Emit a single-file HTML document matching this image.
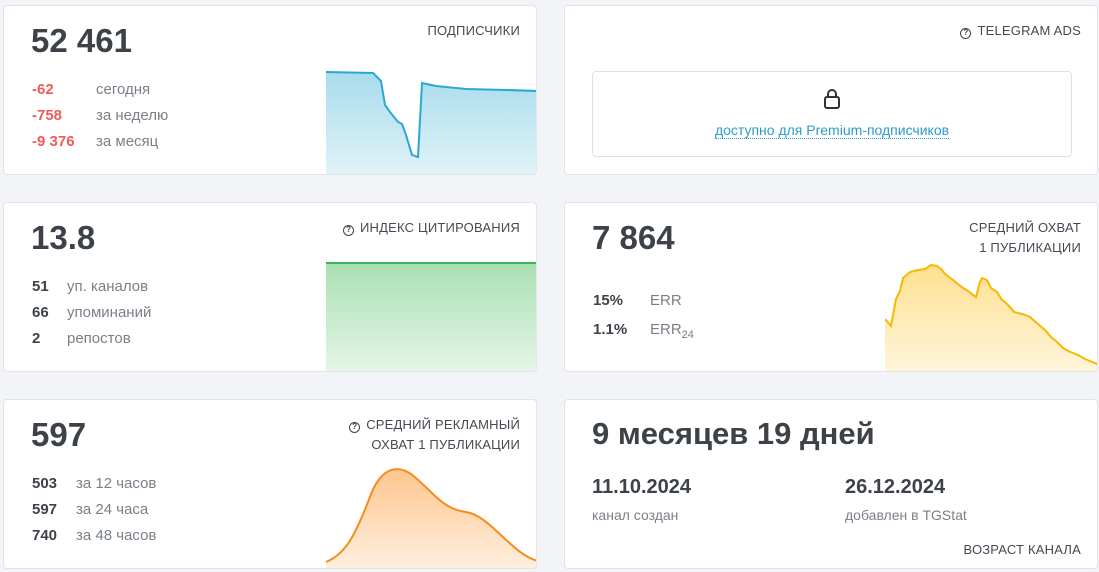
<!DOCTYPE html>
<html><head><meta charset="utf-8"><style>
*{box-sizing:border-box;margin:0;padding:0}
body{width:1099px;height:572px;background:#f3f4f7;font-family:"Liberation Sans",sans-serif;position:relative;overflow:hidden;color:#444a52}
.card{position:absolute;background:#fff;border:1px solid #e0e3e8;border-radius:4px;overflow:hidden}
.big{position:absolute;font-size:33px;font-weight:bold;color:#3d4248}
.lbl{position:absolute;right:16px;font-size:13px;color:#444a52;text-align:right;line-height:20px;letter-spacing:.2px}
.row{position:absolute;font-size:15px;color:#7a8088;white-space:nowrap}
.row b{color:#3d4248;display:inline-block}
.red b{color:#f05a5a}
svg{position:absolute}
.q{display:inline-block;width:11px;height:11px;border:1.5px solid #444;border-radius:50%;font-size:8px;line-height:8px;text-align:center;vertical-align:0;margin-right:6px;font-weight:bold}
</style></head><body>

<div class="card" style="left:3px;top:5px;width:534px;height:170px">
<div class="big" style="left:27px;top:16px">52 461</div>
<div class="lbl" style="top:15px">ПОДПИСЧИКИ</div>
<div class="row red" style="left:28px;top:75px"><b style="width:64px">-62</b>сегодня</div>
<div class="row red" style="left:28px;top:101px"><b style="width:64px">-758</b>за неделю</div>
<div class="row red" style="left:28px;top:127px"><b style="width:64px">-9 376</b>за месяц</div>
<svg style="left:322px;top:54px" width="212" height="116"><defs><linearGradient id="g1" x1="0" y1="0" x2="0" y2="1"><stop offset="0" stop-color="#a7dcec"/><stop offset="1" stop-color="#e2f3f9"/></linearGradient></defs>
<path d="M0 12 L47 13 L52 18 L55 21 L59 45 L64 52 L68 57 L72 62 L76 64 L80 75 L86 95 L92 97 L96 23 L110 26 L140 29 L180 30 L212 31 L212 116 L0 116Z" fill="url(#g1)"/>
<path d="M0 12 L47 13 L52 18 L55 21 L59 45 L64 52 L68 57 L72 62 L76 64 L80 75 L86 95 L92 97 L96 23 L110 26 L140 29 L180 30 L212 31" fill="none" stroke="#2aa8d2" stroke-width="2"/></svg>
</div>

<div class="card" style="left:564px;top:5px;width:534px;height:170px">
<div class="lbl" style="top:15px"><span class="q">?</span>TELEGRAM ADS</div>
<div style="position:absolute;left:27px;top:65px;width:480px;height:86px;border:1px solid #dde0e5;border-radius:4px;text-align:center">
<svg style="left:229px;top:16px" width="20" height="22" viewBox="0 0 20 22"><rect x="3" y="9" width="14" height="11" rx="2" fill="none" stroke="#333" stroke-width="2"/><path d="M6 9V6a4 4 0 0 1 8 0v3" fill="none" stroke="#333" stroke-width="2"/></svg>
<div style="position:absolute;left:0;right:0;top:50px;font-size:14px;color:#2b9cc9"><span style="border-bottom:1px dotted #2b9cc9">доступно для Premium-подписчиков</span></div>
</div></div>

<div class="card" style="left:3px;top:202px;width:534px;height:170px">
<div class="big" style="left:27px;top:16px">13.8</div>
<div class="lbl" style="top:15px"><span class="q">?</span>ИНДЕКС ЦИТИРОВАНИЯ</div>
<div class="row" style="left:28px;top:75px"><b style="width:35px">51</b>уп. каналов</div>
<div class="row" style="left:28px;top:101px"><b style="width:35px">66</b>упоминаний</div>
<div class="row" style="left:28px;top:127px"><b style="width:35px">2</b>репостов</div>
<svg style="left:322px;top:57px" width="212" height="113"><defs><linearGradient id="g2" x1="0" y1="0" x2="0" y2="1"><stop offset="0" stop-color="#a9dfb2"/><stop offset="1" stop-color="#e6f6e9"/></linearGradient></defs>
<rect x="0" y="3" width="212" height="110" fill="url(#g2)"/><path d="M0 3H212" stroke="#3cb55a" stroke-width="2"/></svg>
</div>

<div class="card" style="left:564px;top:202px;width:534px;height:170px">
<div class="big" style="left:27px;top:16px">7 864</div>
<div class="lbl" style="top:15px">СРЕДНИЙ ОХВАТ<br>1 ПУБЛИКАЦИИ</div>
<div class="row" style="left:28px;top:89px"><b style="width:57px">15%</b>ERR</div>
<div class="row" style="left:28px;top:118px"><b style="width:57px">1.1%</b>ERR<sub style="font-size:11px">24</sub></div>
<svg style="left:320px;top:60px" width="214" height="110"><defs><linearGradient id="g3" x1="0" y1="0" x2="0" y2="1"><stop offset="0" stop-color="#fddf90"/><stop offset="1" stop-color="#fff6dc"/></linearGradient></defs>
<path d="M0 56 L6 63 L11 36 L15 28 L18 15 L25 9 L33 7 L40 6 L46 2 L52 3 L57 7 L60 11 L68 17 L73 21 L78 25 L83 28 L88 32 L91 34 L95 19 L97 15 L102 17 L106 25 L112 29 L117 37 L121 40 L126 45 L129 49 L137 51 L145 54 L153 61 L160 67 L166 74 L172 79 L178 85 L183 88 L193 92 L200 96 L212 101 L212 110 L0 110Z" fill="url(#g3)"/>
<path d="M0 56 L6 63 L11 36 L15 28 L18 15 L25 9 L33 7 L40 6 L46 2 L52 3 L57 7 L60 11 L68 17 L73 21 L78 25 L83 28 L88 32 L91 34 L95 19 L97 15 L102 17 L106 25 L112 29 L117 37 L121 40 L126 45 L129 49 L137 51 L145 54 L153 61 L160 67 L166 74 L172 79 L178 85 L183 88 L193 92 L200 96 L212 101" fill="none" stroke="#f8b800" stroke-width="2"/></svg>
</div>

<div class="card" style="left:3px;top:399px;width:534px;height:170px">
<div class="big" style="left:27px;top:16px">597</div>
<div class="lbl" style="top:15px"><span class="q">?</span>СРЕДНИЙ РЕКЛАМНЫЙ<br>ОХВАТ 1 ПУБЛИКАЦИИ</div>
<div class="row" style="left:28px;top:75px"><b style="width:44px">503</b>за 12 часов</div>
<div class="row" style="left:28px;top:101px"><b style="width:44px">597</b>за 24 часа</div>
<div class="row" style="left:28px;top:127px"><b style="width:44px">740</b>за 48 часов</div>
<svg style="left:322px;top:64px" width="212" height="106"><defs><linearGradient id="g4" x1="0" y1="0" x2="0" y2="1"><stop offset="0" stop-color="#fdc68e"/><stop offset="1" stop-color="#fff0e0"/></linearGradient></defs>
<path d="M0 98 C20 90 30 70 45 30 C55 5 70 0 85 10 C105 25 115 45 140 48 C165 52 185 90 212 97 L212 106 L0 106Z" fill="url(#g4)"/>
<path d="M0 98 C20 90 30 70 45 30 C55 5 70 0 85 10 C105 25 115 45 140 48 C165 52 185 90 212 97" fill="none" stroke="#f68b1f" stroke-width="2"/></svg>
</div>

<div class="card" style="left:564px;top:399px;width:534px;height:170px">
<div class="big" style="left:27px;top:16px;font-size:31px">9 месяцев 19 дней</div>
<div style="position:absolute;left:27px;top:76px;font-size:20px;font-weight:bold;color:#3d4248">11.10.2024</div>
<div style="position:absolute;left:27px;top:107px;font-size:14px;color:#7a8088">канал создан</div>
<div style="position:absolute;left:280px;top:76px;font-size:20px;font-weight:bold;color:#3d4248">26.12.2024</div>
<div style="position:absolute;left:280px;top:107px;font-size:14px;color:#7a8088">добавлен в TGStat</div>
<div class="lbl" style="top:140px">ВОЗРАСТ КАНАЛА</div>
</div>
</body></html>
